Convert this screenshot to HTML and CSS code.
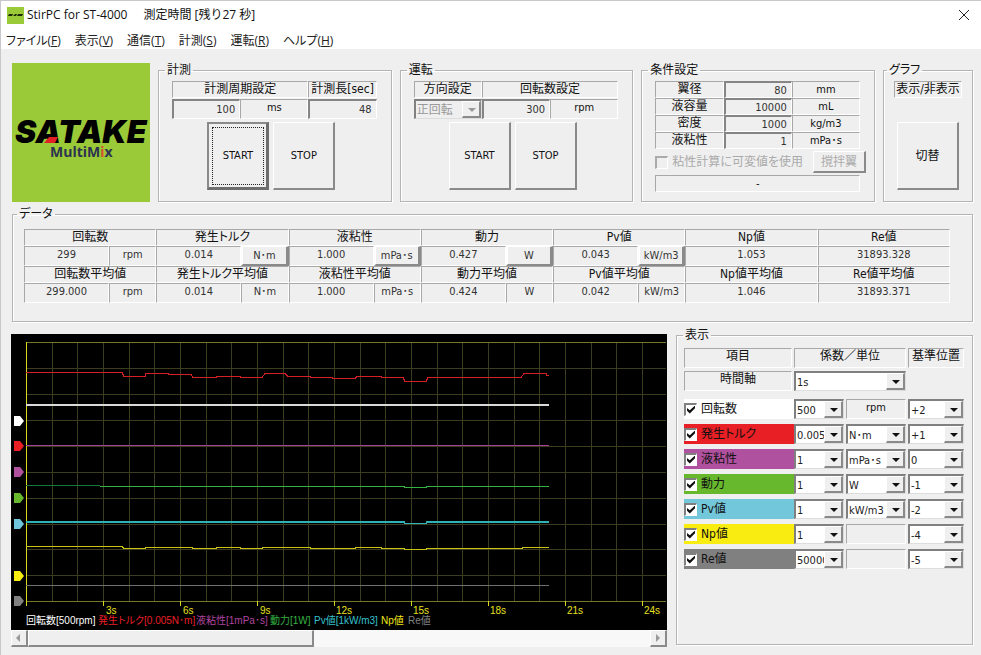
FILE: index.html
```html
<!DOCTYPE html>
<html lang="ja">
<head>
<meta charset="utf-8">
<meta name="viewport" content="width=device-width, initial-scale=1">
<title>StirPC for ST-4000</title>
<link rel="stylesheet" href="styles.css">
</head>
<body>
<header class="titlebar">
  <svg class="app-icon" viewBox="0 0 17 17" aria-hidden="true"><rect width="17" height="17" fill="#9bca38"/><path d="M2 7h4l-1 2H1zM6 9l2-2h2l-1 2zM11 7h5l-1 2h-5z" fill="#1d2a08"/></svg>
  <h1 class="title">StirPC for ST-4000<span class="status">測定時間 [残り27 秒]</span></h1>
  <button class="close" aria-label="閉じる"><svg viewBox="0 0 12 12"><path d="M1 1l10 10M11 1L1 11" stroke="#222" fill="none"/></svg></button>
</header>
<nav class="menubar">
  <a href="#">ファイル(<u>F</u>)</a><a href="#">表示(<u>V</u>)</a><a href="#">通信(<u>T</u>)</a><a href="#">計測(<u>S</u>)</a><a href="#">運転(<u>R</u>)</a><a href="#">ヘルプ(<u>H</u>)</a>
</nav>
<main class="content">
  <div class="top-row">
    <svg class="logo" viewBox="0 0 138 139" role="img" aria-label="SATAKE MultiMix">
      <rect width="138" height="139" fill="#9bca38"/>
      <text class="logo-name" x="3" y="80">SATAKE</text>
      <path d="M32 80l5-6h9l-3 6z" fill="#e31f26"/>
      <text class="logo-sub" x="38" y="94">MultiM<tspan fill="#d8502c">i</tspan>x</text>
    </svg>

    <fieldset class="group">
      <legend>計測</legend>
      <div class="cells measure">
        <label class="cell head span2" for="period">計測周期設定</label>
        <label class="cell head" for="length">計測長[sec]</label>
      </div>
      <div class="cells measure values">
        <input class="field" id="period" value="100">
        <span class="cell">ms</span>
        <input class="field" id="length" value="48">
      </div>
      <div class="buttons">
        <button class="big default">START</button>
        <button class="big">STOP</button>
      </div>
    </fieldset>

    <fieldset class="group">
      <legend>運転</legend>
      <div class="cells measure">
        <label class="cell head" for="direction">方向設定</label>
        <label class="cell head span2" for="speed">回転数設定</label>
      </div>
      <div class="cells measure values">
        <span class="combo off"><select id="direction" disabled><option>正回転</option></select></span>
        <input class="field" id="speed" value="300">
        <span class="cell">rpm</span>
      </div>
      <div class="buttons">
        <button class="big">START</button>
        <button class="big">STOP</button>
      </div>
    </fieldset>

    <fieldset class="group">
      <legend>条件設定</legend>
      <div class="cells conditions">
        <label class="cell head" for="c1">翼径</label><input class="field" id="c1" value="80"><span class="cell">mm</span>
        <label class="cell head" for="c2">液容量</label><input class="field" id="c2" value="10000"><span class="cell">mL</span>
        <label class="cell head" for="c3">密度</label><input class="field" id="c3" value="1000"><span class="cell">kg/m3</span>
        <label class="cell head" for="c4">液粘性</label><input class="field" id="c4" value="1"><span class="cell">mPa･s</span>
      </div>
      <div class="option">
        <input type="checkbox" id="variable" disabled><label for="variable">粘性計算に可変値を使用</label>
        <button class="small" disabled>撹拌翼</button>
      </div>
      <output class="cell note">-</output>
    </fieldset>

    <fieldset class="group graph">
      <legend>グラフ</legend>
      <div class="cell head">表示/非表示</div>
      <div class="buttons"><button class="big">切替</button></div>
    </fieldset>
  </div>

  <fieldset class="group data">
    <legend>データ</legend>
    <table>
      <colgroup><col class="v"><col class="u"><col class="v"><col class="u"><col class="v"><col class="u"><col class="v"><col class="u"><col class="v"><col class="u"><col class="v"><col class="u"><col class="v"><col class="u"></colgroup>
      <tr><th colspan="2">回転数</th><th colspan="2">発生トルク</th><th colspan="2">液粘性</th><th colspan="2">動力</th><th colspan="2">Pv値</th><th colspan="2">Np値</th><th colspan="2">Re値</th></tr>
      <tr><td>299</td><td>rpm</td><td>0.014</td><td class="press"><button>N･m</button></td><td>1.000</td><td class="press"><button>mPa･s</button></td><td>0.427</td><td class="press"><button>W</button></td><td>0.043</td><td class="press"><button>kW/m3</button></td><td colspan="2">1.053</td><td colspan="2">31893.328</td></tr>
      <tr><th colspan="2">回転数平均値</th><th colspan="2">発生トルク平均値</th><th colspan="2">液粘性平均値</th><th colspan="2">動力平均値</th><th colspan="2">Pv値平均値</th><th colspan="2">Np値平均値</th><th colspan="2">Re値平均値</th></tr>
      <tr><td>299.000</td><td>rpm</td><td>0.014</td><td>N･m</td><td>1.000</td><td>mPa･s</td><td>0.424</td><td>W</td><td>0.042</td><td>kW/m3</td><td colspan="2">1.046</td><td colspan="2">31893.371</td></tr>
    </table>
  </fieldset>

  <div class="bottom-row">
    <section class="chart">
      <svg viewBox="0 0 656 296" role="img" aria-label="トレンドグラフ">
        <defs>
          <pattern id="grid" x="15" y="8" width="77" height="259" patternUnits="userSpaceOnUse">
            <path d="M.5 0v259M26.5 0v259M51.5 0v259M0 26.5h77M0 52.5h77M0 78.5h77M0 104.5h77M0 130.5h77M0 156.5h77M0 182.5h77M0 207.5h77M0 233.5h77" stroke="#3c3c1e" fill="none"/>
          </pattern>
          <path id="flag" d="M0-5h6l4 5-4 5h-6z"/>
        </defs>
        <rect width="656" height="296"/>
        <rect x="15" y="8" width="640" height="259" fill="url(#grid)"/>
        <g fill="none" class="traces">
          <path d="M15 8.5h640M15 267.5h640" stroke="#77772a"/>
          <path d="M15.500 8v264M92.500 267v5M169.500 267v5M246.500 267v5M323.500 267v5M400.500 267v5M477.500 267v5M554.500 267v5M631.500 267v5" stroke="#d8d820"/>
          <path d="M15 71H538" stroke="#d9d9d9" stroke-width="2"/>
          <path d="M15 38.500H111L113 42.500H134L135 39.500H157V40.500H180L182 43.500H205L206 42.500H229L230 43.500H251L254 39.500H274L277 42.500H299V43.500H321V44.500H344L346 42.500H370V43.500H392L394 47.500H415L417 43.500H510L513 39.500H535V41.500H538" stroke="#d22024"/>
          <path d="M15 111.500H538" stroke="#a0409a"/>
          <path d="M15 151.500H89" stroke="#127a36"/>
          <path d="M89 152.500H393V153.500H415V152.500H538" stroke="#35b242"/>
          <path d="M15 187.500H393V189.500H415V187.500H538M15 188.500H393M415 188.500H538" stroke="#2fb1b8"/>
          <path d="M15 212.500H111L113 214.500H134V213.500H181V214.500H205V213.500H229V214.500H251V213.500H299V214.500H344V213.500H370V214.500H393V215.500H415V214.500H511V213.500H538" stroke="#c9c414"/>
          <path d="M15 251.500H538" stroke="#707070"/>
        </g>
        <use href="#flag" x="3" y="87" fill="#fff"/><use href="#flag" x="3" y="112" fill="#e81f24"/><use href="#flag" x="3" y="138" fill="#b0519f"/><use href="#flag" x="3" y="164" fill="#68b82e"/><use href="#flag" x="3" y="190" fill="#6fc6db"/><use href="#flag" x="3" y="242" fill="#f8ec10"/><use href="#flag" x="3" y="267" fill="#808080"/>
        <g class="axis" fill="#e6e020"><text x="95" y="280">3s</text><text x="172" y="280">6s</text><text x="249" y="280">9s</text><text x="325" y="280">12s</text><text x="402" y="280">15s</text><text x="479" y="280">18s</text><text x="556" y="280">21s</text><text x="633" y="280">24s</text></g>
        <g class="legend"><text x="15" y="290" fill="#fff">回転数[500rpm]</text><text x="87" y="290" fill="#e81f24">発生トルク[0.005N･m]</text><text x="185" y="290" fill="#b0459f">液粘性[1mPa･s]</text><text x="259" y="290" fill="#35b242">動力[1W]</text><text x="303" y="290" fill="#35c0cc">Pv値[1kW/m3]</text><text x="370" y="290" fill="#f0e814">Np値</text><text x="397" y="290" fill="#808080">Re値</text></g>
      </svg>
      <div class="scrollbar">
        <button class="arrow" aria-label="左へ"><svg viewBox="0 0 8 8"><path d="M5 0v8L1 4z" fill="#999"/></svg></button>
        <div class="track"><div class="thumb"></div></div>
        <button class="arrow" aria-label="右へ"><svg viewBox="0 0 8 8"><path d="M2 0v8l4-4z" fill="#999"/></svg></button>
      </div>
    </section>

    <fieldset class="group display">
      <legend>表示</legend>
      <div class="settings">
        <div class="cell head">項目</div><div class="cell head span2">係数／単位</div><div class="cell head">基準位置</div>
      </div>
      <div class="settings time">
        <label class="cell head" for="axis">時間軸</label><span class="combo span2"><select id="axis"><option>1s</option></select></span>
      </div>
      <div class="settings items">
        <label class="item white"><input type="checkbox" checked>回転数</label><span class="combo"><select aria-label="回転数 係数"><option>500</option></select></span><span class="cell">rpm</span><span class="combo"><select aria-label="回転数 基準位置"><option>+2</option></select></span>
        <label class="item red"><input type="checkbox" checked>発生トルク</label><span class="combo"><select aria-label="発生トルク 係数"><option>0.005</option></select></span><span class="combo"><select aria-label="発生トルク 単位"><option>N･m</option></select></span><span class="combo"><select aria-label="発生トルク 基準位置"><option>+1</option></select></span>
        <label class="item purple"><input type="checkbox" checked>液粘性</label><span class="combo"><select aria-label="液粘性 係数"><option>1</option></select></span><span class="combo"><select aria-label="液粘性 単位"><option>mPa･s</option></select></span><span class="combo"><select aria-label="液粘性 基準位置"><option>0</option></select></span>
        <label class="item green"><input type="checkbox" checked>動力</label><span class="combo"><select aria-label="動力 係数"><option>1</option></select></span><span class="combo"><select aria-label="動力 単位"><option>W</option></select></span><span class="combo"><select aria-label="動力 基準位置"><option>-1</option></select></span>
        <label class="item cyan"><input type="checkbox" checked>Pv値</label><span class="combo"><select aria-label="Pv値 係数"><option>1</option></select></span><span class="combo"><select aria-label="Pv値 単位"><option>kW/m3</option></select></span><span class="combo"><select aria-label="Pv値 基準位置"><option>-2</option></select></span>
        <label class="item yellow"><input type="checkbox" checked>Np値</label><span class="combo"><select aria-label="Np値 係数"><option>1</option></select></span><span class="cell"></span><span class="combo"><select aria-label="Np値 基準位置"><option>-4</option></select></span>
        <label class="item gray"><input type="checkbox" checked>Re値</label><span class="combo"><select aria-label="Re値 係数"><option>50000</option></select></span><span class="cell"></span><span class="combo"><select aria-label="Re値 基準位置"><option>-5</option></select></span>
      </div>
    </fieldset>
  </div>
</main>
</body>
</html>
```

FILE: styles.css
```css
* { box-sizing: border-box; }

body {
  margin: 0;
  min-height: 100vh;
  border: solid #c8c8cc;
  border-width: 1px 0 0 1px;
  background: #efefef;
  color: #111;
  font: 11px/14px "DejaVu Sans Condensed", "Noto Sans CJK JP", sans-serif;
  font-feature-settings: "palt";
}

button, input, select { font: inherit; color: inherit; margin: 0; border-radius: 0; font-feature-settings: inherit; }

/* Title and menu */
.titlebar {
  display: flex;
  align-items: center;
  height: 28px;
  padding: 0 11px 0 6px;
  background: #fff;
}
.app-icon { width: 17px; height: 17px; }
.title {
  flex: 1;
  margin: 0 0 0 3px;
  font: 12px/16px "Open Sans", "Noto Sans CJK JP", sans-serif;
}
.status { margin-left: 16px; }
.close { width: 12px; height: 12px; padding: 0; border: 0; background: none; }
.close svg { display: block; }
.menubar {
  display: flex;
  gap: 14px;
  height: 20px;
  padding: 0 5px;
  background: #fff;
  font: 12px/24px "Open Sans", "Noto Sans CJK JP", sans-serif;
  font-feature-settings: "palt";
}
.menubar a { color: #222; text-decoration: none; }

/* Frames */
.content { padding: 14px 8px 8px 11px; }
.top-row {
  display: grid;
  grid-template-columns: 138px 1fr 1fr 1fr 90px;
  gap: 8px;
}
.logo { display: block; width: 100%; }
.logo-name { font: italic 900 32px Inter, sans-serif; }
.logo-sub { font: bold 14px "Open Sans", sans-serif; fill: #2c3450; }

.group {
  display: block;
  min-width: 0;
  margin: 0;
  padding: 4px 14px 8px 13px;
  border: 1px solid #b4b4b4;
  box-shadow: 1px 1px 0 #fff, inset 1px 1px 0 #fff;
}
.group legend { margin-left: -7px; padding: 0 2px; font-size: 12px; line-height: 14px; }

.cell {
  display: block;
  border: 1px solid;
  border-color: #a8a8a8 #fff #fff #a8a8a8;
  text-align: center;
  line-height: 15px;
  white-space: nowrap;
}
.head { font-size: 12px; }
.span2 { grid-column: span 2; }
.cells { display: grid; grid-template-columns: repeat(3, 1fr); }
.measure { grid-auto-rows: 17px; }
.values { grid-auto-rows: 20px; margin-top: 1px; }
.conditions { grid-auto-rows: 17px; }

.field {
  min-width: 0;
  width: 100%;
  padding: 1px 4px 0;
  border: solid;
  border-width: 2px 1px 1px 2px;
  border-color: #858585 #fff #fff #858585;
  background: #efefef;
  color: #333;
  text-align: right;
}

.buttons { display: flex; justify-content: center; gap: 4px; margin-top: 3px; padding-right: 6px; }
.big, .small {
  border: solid;
  border-width: 1px 2px 2px 1px;
  border-color: #fff #8a8a8a #8a8a8a #fff;
  background: #efefef;
}
.big { width: 62px; height: 68px; padding: 0; }
.default {
  border-width: 2px 3px 3px 2px;
  border-color: #8a8a8a #6e6e6e #6e6e6e #8a8a8a;
  outline: 1px dotted #222;
  outline-offset: -6px;
}

.option { display: flex; align-items: center; height: 26px; margin-right: -6px; color: #aaa; font-size: 12px; }
.option label { margin-left: 4px; white-space: nowrap; }
.small { margin-left: auto; width: 53px; height: 22px; padding: 0; color: #aaa; font-size: 12px; }
.note { height: 17px; }
.graph { padding-left: 10px; padding-right: 10px; }
.graph .buttons { margin-top: 24px; padding: 0; }
.graph .big { font-size: 12px; }

input[type="checkbox"] {
  appearance: none;
  flex: none;
  width: 13px;
  height: 13px;
  border: solid;
  border-width: 2px 1px 1px 2px;
  border-color: #808080 #fff #fff #808080;
  background: #fff;
}
input[type="checkbox"]:disabled { background: #efefef; border-color: #aaa #fff #fff #aaa; }
input[type="checkbox"]:checked::before {
  content: "";
  display: block;
  width: 8px;
  height: 8px;
  margin: 1px;
  background: #111;
  clip-path: polygon(0 30%, 35% 60%, 100% 0, 100% 35%, 35% 100%, 0 65%);
}

/* Drop-downs */
.combo {
  position: relative;
  display: block;
  min-width: 0;
  height: 20px;
}
.combo select {
  appearance: none;
  display: block;
  width: 100%;
  height: 100%;
  padding: 2px 16px 0 1px;
  border: solid;
  border-width: 2px 1px 1px 2px;
  border-color: #808080 #ddd #ddd #808080;
  background: #fff;
  color: #222;
  text-overflow: clip;
}
.combo::before {
  content: "";
  position: absolute;
  top: 2px;
  right: 1px;
  width: 16px;
  bottom: 1px;
  border: solid;
  border-width: 1px 2px 2px 1px;
  border-color: #fff #8a8a8a #8a8a8a #fff;
  background: #efefef;
  pointer-events: none;
}
.combo::after {
  content: "";
  position: absolute;
  top: 9px;
  right: 6px;
  border: solid transparent;
  border-width: 4px 4px 0;
  border-top-color: #111;
  pointer-events: none;
}
.combo.off select { background: #efefef; color: #999; opacity: 1; font-size: 12px; padding-top: 0; }
.combo.off::after { border-top-color: #999; }

/* Readings */
.data { margin-top: 5px; padding: 8px 22px 18px 11px; }
.data table { width: 100%; table-layout: fixed; border-spacing: 0; }
.v { width: 9%; }
.u { width: 5%; }
.data th, .data td {
  padding: 0;
  border: 1px solid;
  border-color: #a8a8a8 #fff #fff #a8a8a8;
  text-align: center;
  vertical-align: top;
  font-weight: normal;
}
.data th { height: 17px; font-size: 12px; line-height: 15px; }
.data td { height: 20px; line-height: 16px; color: #333; }
.data .press { border: 0; }
.press button {
  display: block;
  width: 100%;
  height: 20px;
  padding: 1px 0 0;
  border: solid;
  border-width: 1px 3px 2px 2px;
  border-color: #fff #8a8a8a #8a8a8a #fff;
  background: #efefef;
}

/* Chart */
.bottom-row {
  display: grid;
  grid-template-columns: 1fr 297px;
  gap: 9px;
  margin-top: 6px;
}
.chart { min-width: 0; margin: 6px 0 0 -1px; }
.chart > svg { display: block; width: 100%; }
.traces { shape-rendering: crispEdges; }
.axis, .legend {
  font: 10px "Liberation Sans", "Noto Sans CJK JP", sans-serif;
  font-feature-settings: "palt";
}
.scrollbar { display: flex; height: 17px; }
.arrow {
  display: grid;
  place-items: center;
  width: 17px;
  padding: 0;
  border: solid;
  border-width: 1px 2px 2px 1px;
  border-color: #fff #8a8a8a #8a8a8a #fff;
  background: #efefef;
}
.arrow svg { width: 8px; height: 8px; }
.track { flex: 1; background: #f8f8f8; }
.thumb {
  width: 46%;
  height: 100%;
  border: solid;
  border-width: 1px 2px 2px 1px;
  border-color: #fff #8a8a8a #8a8a8a #fff;
  background: #efefef;
}

/* Trace settings */
.display { margin-bottom: 2px; padding: 6px 8px 8px 7px; }
.display legend { margin-left: -1px; }
.settings {
  display: grid;
  grid-template-columns: 108px 50px 60px 1fr;
  grid-auto-rows: 20px;
  column-gap: 2px;
}
.time { margin-top: 3px; }
.items { row-gap: 5px; margin-top: 8px; }
.item { display: flex; align-items: center; gap: 4px; margin-right: -2px; font-size: 12px; }
.white { background: #fff; }
.red { background: #e81f24; }
.purple { background: #b0519f; }
.green { background: #68b82e; }
.cyan { background: #73c7da; }
.yellow { background: #f8ec10; }
.gray { background: #808080; }
```
